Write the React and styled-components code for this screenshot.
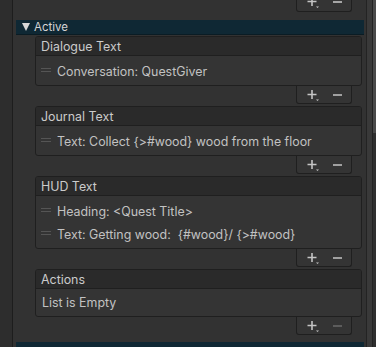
import styled, {createGlobalStyle} from 'styled-components';

const Global = createGlobalStyle`
  html, body {
    margin: 0;
    padding: 0;
    background: #323232;
    overflow: hidden;
  }
  body {
    font-family: Inter, "Noto Sans", sans-serif;
    font-size: 12.4px;
  }
`;

const Page = styled.div`
  display: flex;
  align-items: flex-start;
  width: 376px;
  height: 347px;
  overflow: hidden;
  background: #323232;
`;

const Gutter = styled.div`
  width: 12px;
  height: 100%;
  flex: none;
  background: #2d2d2d;
  border-right: 1px solid #1d1d1d;
`;

const Content = styled.div`
  flex: 1;
  padding-left: 3px;
  display: flex;
  flex-direction: column;
  & > * { flex-shrink: 0; }
`;

const Scroll = styled.div`
  width: 12px;
  height: 100%;
  flex: none;
  display: flex;
  padding-left: 2px;
  box-sizing: border-box;
`;

const Track = styled.div`
  width: 5px;
  border-left: 1px solid #232323;
  border-right: 1px solid #232323;
  background: #393939;
`;

const Thumb = styled.div`
  flex: 1;
  background: linear-gradient(#4a4a4a 0 133px, #2f2f2f 133px);
`;

const Footer = styled.div`
  align-self: flex-end;
  flex-shrink: 0;
  margin-right: ${p => p.$right}px;
  width: 56px;
  height: ${p => p.$h || 18}px;
  box-sizing: border-box;
  display: flex;
  align-items: ${p => (p.$h ? 'flex-end' : 'center')};
  padding-left: 3px;
  background: #343434;
  border: 1px solid #1f1f1f;
  border-top: none;
  border-radius: 0 0 3px 3px;
  overflow: hidden;
`;

const Btn = styled.div`
  width: 25px;
  height: 16px;
  flex: none;
  display: flex;
  align-items: center;
  justify-content: center;
  color: ${p => (p.$off ? '#6a6a6a' : '#c4c4c4')};
`;

const Foldout = styled.div`
  margin-top: ${p => p.$top}px;
  height: 14px;
  display: flex;
  align-items: center;
  gap: 4px;
  padding-left: 6px;
  background: #0f2834;
  border-bottom: 1px solid #0a1c24;
  color: #d4d4d4;
  font-size: 11.5px;
`;

const Arrow = styled.span`
  width: 0;
  height: 0;
  border-left: 4px solid transparent;
  border-right: 4px solid transparent;
  border-top: 8px solid #d8d8d8;
`;

const Lists = styled.div`
  display: flex;
  flex-direction: column;
  padding: 1px 2px 0 19px;
`;

const Group = styled.div`
  display: flex;
  flex-direction: column;
  margin-top: ${p => p.$gap}px;
`;

const Box = styled.div`
  border: 1px solid #1f1f1f;
  border-radius: 3px;
  background: #343434;
  overflow: hidden;
`;

const Header = styled.div`
  height: 19px;
  box-sizing: border-box;
  padding-left: 5px;
  display: flex;
  align-items: center;
  background: #2a2a2a;
  border-bottom: 1px solid #1f1f1f;
  color: #cbcbcb;
`;

const Body = styled.div`
  padding: 4px 0 2px;
`;

const Row = styled.div`
  height: 23px;
  display: flex;
  align-items: center;
  padding-left: 5px;
  color: #c2c2c2;
  white-space: pre;
`;

const Handle = styled.span`
  width: 10px;
  height: 4px;
  margin-right: 6px;
  border-top: 1px solid #555;
  border-bottom: 1px solid #555;
  box-sizing: border-box;
  position: relative;
  top: -2px;
`;

const Empty = styled.div`
  height: 27px;
  display: flex;
  align-items: center;
  padding-left: 6px;
  color: #c2c2c2;
  margin: -4px 0 -2px;
`;

const Plus = () => (
  <svg width="12" height="12" viewBox="0 0 12 12">
    <path d="M5 1v9M0.5 5.5h9" stroke="currentColor" strokeWidth="1.6" fill="none" />
    <path d="M9 10.5h3l-1.5 1.5z" fill="currentColor" />
  </svg>
);

const Minus = () => (
  <svg width="9" height="10" viewBox="0 0 9 10">
    <path d="M0 5h9" stroke="currentColor" strokeWidth="1.6" />
  </svg>
);

const lists = [
  {title: 'Dialogue Text', items: ['Conversation: QuestGiver']},
  {title: 'Journal Text', items: ['Text: Collect {>#wood} wood from the floor']},
  {title: 'HUD Text', items: ['Heading: <Quest Title>', 'Text: Getting wood:  {#wood}/ {>#wood}']},
  {title: 'Actions', items: []},
];

export default function App() {
  return (
    <Page>
      <Global />
      <Gutter />
      <Content>
        <Footer $right={12} $h={12}>
          <Btn style={{marginBottom: 1}}><Plus /></Btn>
          <Btn style={{marginBottom: 1}}><Minus /></Btn>
        </Footer>
        <Foldout $top={8}><Arrow />Active</Foldout>
        <Lists>
          {lists.map((l, i) => (
            <Group key={l.title} $gap={i ? 2 : 0}>
              <Box>
                <Header>{l.title}</Header>
                <Body>
                  {l.items.length ? l.items.map(t => (
                    <Row key={t}><Handle />{t}</Row>
                  )) : <Empty>List is Empty</Empty>}
                </Body>
              </Box>
              <Footer $right={10}>
                <Btn><Plus /></Btn>
                <Btn $off={!l.items.length}><Minus /></Btn>
              </Footer>
            </Group>
          ))}
        </Lists>
        <Foldout $top={7} />
      </Content>
      <Scroll>
        <Track />
        <Thumb />
      </Scroll>
    </Page>
  );
}
